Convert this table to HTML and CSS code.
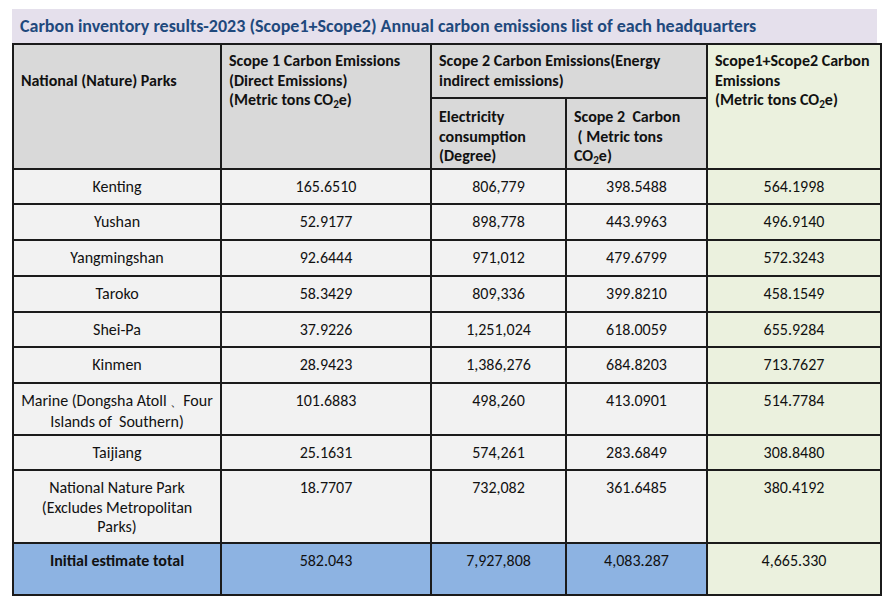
FILE: index.html
```html
<!DOCTYPE html>
<html lang="en">
<head>
<meta charset="utf-8">
<title>Carbon inventory results-2023</title>
<link rel="stylesheet" href="styles.css">
</head>
<body>
<div class="page">
  <div class="title">Carbon inventory results-2023 (Scope1+Scope2) Annual carbon emissions list of each headquarters</div>
  <table class="inv">
    <colgroup>
      <col class="c1"><col class="c2"><col class="c3"><col class="c4"><col class="c5">
    </colgroup>
    <thead>
      <tr class="h1">
        <th rowspan="2" class="park">National (Nature) Parks</th>
        <th rowspan="2">Scope 1 Carbon Emissions<br>(Direct Emissions)<br>(Metric tons CO<sub>2</sub>e)</th>
        <th colspan="2">Scope 2 Carbon Emissions(Energy<br>indirect emissions)</th>
        <th rowspan="2" class="sum">Scope1+Scope2 Carbon<br>Emissions<br>(Metric tons CO<sub>2</sub>e)</th>
      </tr>
      <tr class="h2">
        <th>Electricity<br>consumption<br>(Degree)</th>
        <th>Scope 2&nbsp; Carbon<br>&nbsp;( Metric tons<br>CO<sub>2</sub>e)</th>
      </tr>
    </thead>
    <tbody>
      <tr class="r1"><td>Kenting</td><td>165.6510</td><td>806,779</td><td>398.5488</td><td class="sum">564.1998</td></tr>
      <tr class="r1b"><td>Yushan</td><td>52.9177</td><td>898,778</td><td>443.9963</td><td class="sum">496.9140</td></tr>
      <tr class="r1b"><td>Yangmingshan</td><td>92.6444</td><td>971,012</td><td>479.6799</td><td class="sum">572.3243</td></tr>
      <tr class="r1b"><td>Taroko</td><td>58.3429</td><td>809,336</td><td>399.8210</td><td class="sum">458.1549</td></tr>
      <tr class="r1"><td>Shei-Pa</td><td>37.9226</td><td>1,251,024</td><td>618.0059</td><td class="sum">655.9284</td></tr>
      <tr class="r1b"><td>Kinmen</td><td>28.9423</td><td>1,386,276</td><td>684.8203</td><td class="sum">713.7627</td></tr>
      <tr class="r2"><td>Marine (Dongsha Atoll <span class="dun">、</span>Four<br>Islands of&nbsp; Southern)</td><td>101.6883</td><td>498,260</td><td>413.0901</td><td class="sum">514.7784</td></tr>
      <tr class="r1"><td>Taijiang</td><td>25.1631</td><td>574,261</td><td>283.6849</td><td class="sum">308.8480</td></tr>
      <tr class="r3"><td>National Nature Park<br>(Excludes Metropolitan<br>Parks)</td><td>18.7707</td><td>732,082</td><td>361.6485</td><td class="sum">380.4192</td></tr>
      <tr class="total"><td class="b">Initial estimate total</td><td>582.043</td><td>7,927,808</td><td>4,083.287</td><td class="sum">4,665.330</td></tr>
    </tbody>
  </table>
</div>
</body>
</html>
```

FILE: styles.css
```css
html, body {
  margin: 0;
  padding: 0;
  background: #ffffff;
}
body {
  font-family: "Carlito", "Lato", "Liberation Sans", sans-serif;
  color: #111111;
}
.page {
  padding: 9px 0 0 12px;
  width: 868px;
}
.title {
  width: 865px;
  height: 34px;
  box-sizing: border-box;
  background: #e5e0ec;
  color: #1f497d;
  font-weight: 700;
  font-size: 18px;
  line-height: 34px;
  padding-left: 8px;
  white-space: nowrap;
}
.inv {
  border-collapse: collapse;
  table-layout: fixed;
  width: 868px;
  font-size: 16px;
  line-height: 19.5px;
}
.c1 { width: 208px; }
.c2 { width: 210px; }
.c3 { width: 135px; }
.c4 { width: 141px; }
.c5 { width: 174px; }
.inv th, .inv td {
  border: 2px solid #1b1b1b;
  vertical-align: top;
  padding: 0 6px;
}
.inv th {
  background: #d9d9d9;
  text-align: left;
  font-weight: 700;
  padding-top: 6px;
  padding-left: 7px;
  white-space: nowrap;
}
.h1 th { height: 46px; }
.h2 th { height: 61px; padding-top: 8px; }
.inv th.park { padding-top: 26px; }
.inv th.sum { background: #ebf1de; }
.inv sub {
  font-size: 0.7em;
  line-height: 0;
  vertical-align: -0.25em;
}
.inv td {
  background: #f2f2f2;
  text-align: center;
  padding-top: 7px;
  white-space: nowrap;
}
.inv td.sum { background: #ebf1de; }
.dun { font-size: 0.8em; }
.r1 td { height: 26px; }
.r1b td { height: 27px; }
.r2 td { height: 43px; }
.r3 td { height: 64px; }
.total td { background: #8db3e2; height: 43px; }
.total td.sum { background: #ebf1de; }
.b { font-weight: 700; }
```
